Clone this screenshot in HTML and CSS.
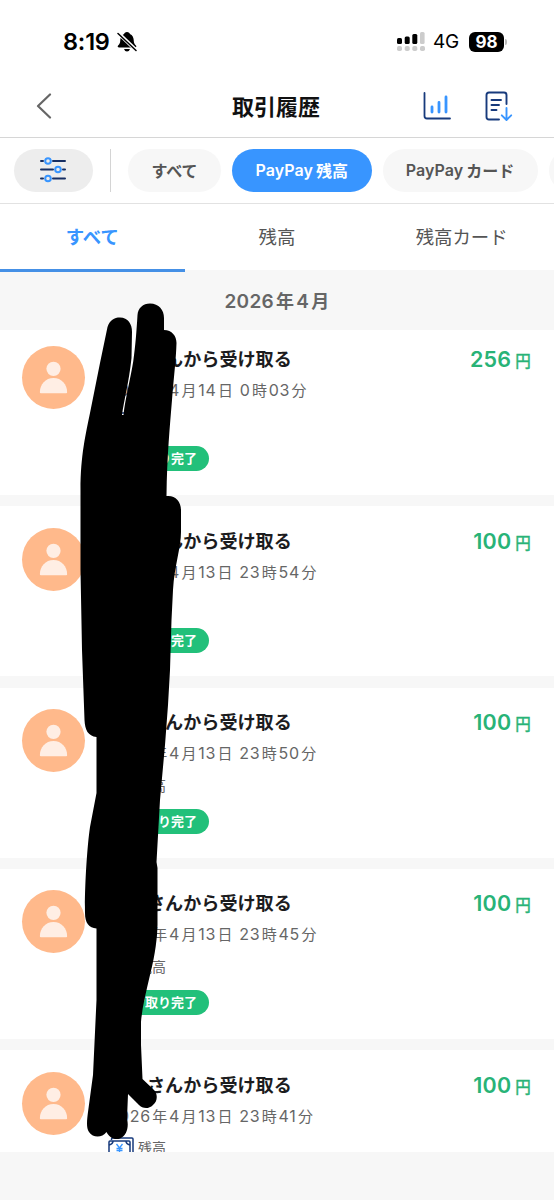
FILE: index.html
```html
<!DOCTYPE html>
<html lang="ja">
<head>
<meta charset="utf-8">
<title>取引履歴</title>
<link rel="stylesheet" href="styles.css">
</head>
<body>
<svg class="defs" aria-hidden="true">
  <symbol id="person" viewBox="0 0 62 62"><circle cx="31" cy="22.5" r="7"/><path d="M17.6 45.5c0-7.8 5.6-14 13.4-14s13.4 6.2 13.4 14q0 1-1 1H18.6q-1 0-1-1z"/></symbol>
  <symbol id="cash" viewBox="0 0 26 20"><g fill="none" stroke="#173a7c" stroke-width="1.5"><path d="M3.5 3V2Q3.500 1 4.500 1H24Q25 1 25 2V16H22"/><rect x="1" y="4" width="21" height="14" rx="1"/><path d="M5 4Q5 7 1 8M18 4Q18 7 22 8"/></g><path d="M8.500 7l3 4 3-4M11.500 11v5M8.500 11.500h6M8.500 13.500h6" fill="none" stroke="#3895ff" stroke-width="1.300"/></symbol>
</svg>
<div class="screen">
  <header class="status">
    <span class="clock">8:19</span>
    <svg class="bell" width="20" height="20" viewBox="0 0 20 20"><path d="M10 0c1.700 0 2.700 1 2.900 2 2.700 1 3.700 3.500 3.800 6 .1 3 .7 4 2.200 5.500q1.200 1.700-.8 1.900H1.900q-2-.2-.8-1.900C2.600 12 3.200 11 3.300 8c.1-2.500 1.100-5 3.800-6C7.300 1 8.300 0 10 0zM7 17h6q-.8 2.500-3 2.500T7 17z"/><path d="M0 0L20 19" stroke="#fff" stroke-width="3.800"/><path d="M1 1.500L19 18.500" stroke="#000" stroke-width="1.500" stroke-linecap="round"/></svg>
    <svg class="signal" width="28" height="20" viewBox="0 0 28 20"><g fill="#ccc"><rect x="23" y="0" width="4.600" height="12" rx="1.500"/><rect x="0" y="14" width="5" height="5" rx="1.800"/><rect x="7.700" y="14" width="5" height="5" rx="1.800"/><rect x="15.300" y="14" width="5" height="5" rx="1.800"/><rect x="23" y="14" width="5" height="5" rx="1.800"/></g><rect x="0" y="6" width="5" height="6" rx="1.500"/><rect x="7.700" y="4.500" width="5" height="7.500" rx="1.500"/><rect x="15.300" y="2" width="5" height="10" rx="1.500"/></svg>
    <span class="network">4G</span>
    <span class="battery">98</span><i class="cap"></i>
  </header>
  <nav class="titlebar">
    <svg class="back" width="16" height="26" viewBox="0 0 16 26"><path d="M14 1.500L2 13l12 11.500" fill="none" stroke="#666" stroke-width="2.200" stroke-linecap="round" stroke-linejoin="round"/></svg>
    <h1>取引履歴</h1>
    <svg class="chart" width="28" height="28" viewBox="0 0 28 28" fill="none" stroke-linecap="round" stroke-width="2"><path d="M1.500 1V24q0 2.500 2.500 2.500H27" stroke="#173a7c" stroke-width="1.800"/><path d="M9 20v-5M16 20V10.500M23 20V5" stroke="#3895ff" stroke-width="2.800"/></svg>
    <svg class="export" width="28" height="30" viewBox="0 0 28 30" fill="none" stroke-linecap="round" stroke-linejoin="round"><path d="M14 28.500H4Q1.500 28.500 1.500 26V4Q1.500 1.500 4 1.500H19Q21.500 1.500 21.500 4V13M6.500 9H16M6.500 14h7.500M6.500 19h5" stroke="#173a7c" stroke-width="1.900"/><path d="M21.500 17V28.500M16.800 24.300l4.700 4.700 4.700-4.700" stroke="#3895ff" stroke-width="1.900"/></svg>
  </nav>
  <div class="filters">
    <span class="chip tune"><svg width="28" height="26" viewBox="0 0 28 26" fill="none" stroke="#172f63" stroke-width="2" stroke-linecap="round"><path d="M2 4h2M14 4h12M2 12.500h12M24 12.500h2M2 21.500h2M14 21.500h12"/><g stroke="#3895ff"><circle cx="9" cy="4" r="2.800"/><circle cx="19" cy="12.500" r="2.800"/><circle cx="9" cy="21.500" r="2.800"/></g></svg></span>
    <i class="divider"></i>
    <span class="chip all">すべて</span>
    <span class="chip active"><span>PayPay</span>残高</span>
    <span class="chip card"><span>PayPay</span>カード</span>
    <span class="chip more"></span>
  </div>
  <div class="tabs"><span class="tab current">すべて</span><span class="tab">残高</span><span class="tab">残高カード</span></div>
  <h2><b>2026</b>年<b class="month">4</b>月</h2>
  <main class="list">
    <article class="item first"><svg class="avatar"><use href="#person"/></svg><div class="body"><h3>さんから受け取る</h3><p class="date"><b>2026</b>年<b>4</b>月<b>14</b>日 <b>0</b>時<b>03</b>分</p><p class="source"><svg class="cash"><use href="#cash"/></svg>残高</p><span class="badge">受け取り完了</span></div><p class="amount">256<small>円</small></p></article>
    <article class="item"><svg class="avatar"><use href="#person"/></svg><div class="body"><h3>さんから受け取る</h3><p class="date"><b>2026</b>年<b>4</b>月<b>13</b>日 <b>23</b>時<b>54</b>分</p><p class="source"><svg class="cash"><use href="#cash"/></svg>残高</p><span class="badge">受け取り完了</span></div><p class="amount">100<small>円</small></p></article>
    <article class="item"><svg class="avatar"><use href="#person"/></svg><div class="body"><h3>さんから受け取る</h3><p class="date"><b>2026</b>年<b>4</b>月<b>13</b>日 <b>23</b>時<b>50</b>分</p><p class="source"><svg class="cash"><use href="#cash"/></svg>残高</p><span class="badge">受け取り完了</span></div><p class="amount">100<small>円</small></p></article>
    <article class="item"><svg class="avatar"><use href="#person"/></svg><div class="body"><h3>さんから受け取る</h3><p class="date"><b>2026</b>年<b>4</b>月<b>13</b>日 <b>23</b>時<b>45</b>分</p><p class="source"><svg class="cash"><use href="#cash"/></svg>残高</p><span class="badge">受け取り完了</span></div><p class="amount">100<small>円</small></p></article>
    <article class="item"><svg class="avatar"><use href="#person"/></svg><div class="body"><h3>さんから受け取る</h3><p class="date"><b>2026</b>年<b>4</b>月<b>13</b>日 <b>23</b>時<b>41</b>分</p><p class="source"><svg class="cash"><use href="#cash"/></svg>残高</p></div><p class="amount">100<small>円</small></p></article>
  </main>
  <svg class="marker" width="554" height="1200" viewBox="0 0 554 1200"><path d="M80.500 490C80.500 455 86 433 90 413L100 363L107.500 327C110 320 114 317.500 120 317.500C128 317.500 132 324 132 332L131.500 358C129 382 124 400 122 415H123.500C125 400 131 376 133.300 361C135.500 345 136.500 332 137.500 315C138 308 143 303.500 150 303.500C159 303.500 164 310 164 318V330C172 330 176.500 336 176.500 343C176 360 174 375 172 400C170 425 167 455 166.500 496C175 495 181 501 181 510V532C181 548 174.500 565 173 590L171.500 620L170 670L168 705L165 745L160 800L156.500 862L157.500 868V925C157 945 153 963 150 975C146 992 142 1008 141 1022V1045L142.500 1079L153 1089C158 1093 158 1101 153 1105C148 1110 142 1108 139 1105L128 1094L127 1119C129 1126 127 1136 120 1138.500C114 1140.500 109 1137 106.500 1132C102 1138 93 1138 89 1132C86 1128 87 1120 88 1112L93 1075L96.500 1000V928.500C89 928 85 923 85 913C84.500 890 87 847 90 827L96.500 793V737C88 736 85 730 84.500 720L82 650L80.500 570Z"/></svg>
</div>
</body>
</html>
```
FILE: styles.css
```css
* { box-sizing: border-box; margin: 0; padding: 0; }
body { font-family: Inter, "Noto Sans CJK JP", sans-serif; color: #1c1c1e; background: #fff; }
b { font-weight: inherit; }
.defs { display: none; }
.screen { position: relative; width: 554px; height: 1200px; overflow: hidden; background: #f7f7f7; }
.status { display: flex; align-items: center; height: 75px; padding: 8px 0 0 63px; background: #fff; color: #000; }
.clock { width: 50px; font-size: 23.500px; font-weight: 600; letter-spacing: -.2px; }
.bell { margin-left: 4px; }
.signal { margin-left: 260px; }
.network { width: 28px; margin-left: 8px; font-size: 19px; font-weight: 400; letter-spacing: -.3px; }
.battery { width: 35px; height: 20px; margin-left: 8px; border-radius: 6px; background: #000; color: #fff; font-size: 17px; font-weight: 700; line-height: 20px; text-align: center; }
.cap { width: 2px; height: 6px; margin-left: 1px; border-radius: 0 2px 2px 0; background: #bbb; }
.titlebar { display: flex; align-items: center; height: 63px; padding-left: 36px; border-bottom: 1px solid #d6d6d6; background: #fff; }
h1 { width: 92px; margin: 1px 0 0 180px; font-size: 22px; font-weight: 700; line-height: 30px; color: #111; white-space: nowrap; }
.chart { margin-left: 99px; }
.export { margin-left: 34px; }
.filters { display: flex; align-items: center; height: 66px; padding-left: 14px; border-bottom: 1px solid #e2e2e2; background: #fff; overflow: hidden; }
.chip { display: flex; flex: none; align-items: center; justify-content: center; height: 43px; padding-bottom: 2px; border-radius: 22px; background: #f7f7f7; color: #555; font-size: 16px; font-weight: 600; }
.chip span { margin-right: 3px; letter-spacing: .1px; }
.tune { width: 79px; padding: 0 1px 1px 0; background: #ededed; }
.divider { flex: none; width: 1px; height: 43px; margin: 0 17px; background: #d4d4d4; }
.all { width: 93px; }
.active { width: 139.500px; margin-left: 11px; background: #3895ff; color: #fff; }
.card { width: 155px; margin-left: 11px; }
.more { width: 80px; margin-left: 11px; }
.tabs { display: grid; grid-template-columns: repeat(3, 1fr); height: 65.500px; background: #fff; }
.tab { padding-top: 1px; color: #555; font-size: 18.400px; line-height: 64px; text-align: center; white-space: nowrap; }
.current { border-bottom: 3px solid #4590e6; color: #3895ff; font-weight: 600; }
h2 { height: 60.500px; color: #666; font-size: 18px; font-weight: 600; line-height: 63px; text-align: center; letter-spacing: .3px; }
h2 b { margin-right: 2px; font-size: 19px; }
.month { margin-left: 2px; }
.list { display: flex; flex-direction: column; gap: 11.250px; height: 822px; overflow: hidden; }
.item { display: flex; flex: none; height: 170px; padding: 21.500px 23px 0 22px; background: #fff; }
.first { height: 165px; padding-top: 16px; }
.avatar { flex: none; width: 63px; height: 63px; border-radius: 50%; background: #ffb98b; fill: #ffeee4; }
.body { flex: 1; margin-left: 23px; }
h3 { padding-left: 39px; font-size: 18.100px; font-weight: 700; line-height: 27px; }
.date { margin: 4px 0 0 -.5px; color: #666; font-size: 15px; line-height: 26px; letter-spacing: .7px; white-space: nowrap; }
.date b { margin: 0 1.500px 0 1px; font-size: 16px; }
.source { display: flex; height: 27px; margin-top: 4px; align-items: center; color: #666; font-size: 14px; }
.cash { width: 26px; height: 20px; margin-right: 4px; }
.badge { display: block; width: 101px; height: 25px; margin-top: 11px; padding-left: 11px; border-radius: 13px; background: #22c07a; color: #fff; font-size: 13px; font-weight: 600; line-height: 25px; white-space: nowrap; }
.amount { color: #28b377; font-size: 21.500px; font-weight: 600; line-height: 27px; white-space: nowrap; letter-spacing: .2px; }
small { margin-left: 4px; font-size: 15.500px; font-weight: 400; -webkit-text-stroke: .5px #28b377; }
.marker { position: absolute; top: 0; left: 0; pointer-events: none; }
```
